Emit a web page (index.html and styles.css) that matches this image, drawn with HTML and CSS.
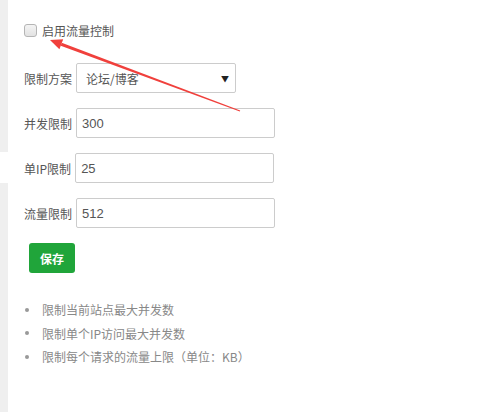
FILE: index.html
```html
<!DOCTYPE html>
<html lang="zh-CN">
<head>
<meta charset="utf-8">
<title>流量控制</title>
<link rel="stylesheet" href="styles.css">
</head>
<body>
<div class="page">
  <aside class="strip">
    <div class="strip-top"></div>
    <div class="strip-gap"></div>
    <div class="strip-bottom"></div>
  </aside>
  <main class="content">
    <label class="toggle"><span class="checkbox"></span><span class="toggle-text">启用流量控制</span></label>
    <div class="form">
      <div class="row">
        <span class="label">限制方案</span>
        <div class="select"><span>论坛/博客</span><span class="caret">▼</span></div>
      </div>
      <div class="row">
        <span class="label">并发限制</span>
        <div class="input">300</div>
      </div>
      <div class="row">
        <span class="label">单IP限制</span>
        <div class="input">25</div>
      </div>
      <div class="row">
        <span class="label">流量限制</span>
        <div class="input">512</div>
      </div>
      <button class="btn-save">保存</button>
    </div>
    <ul class="tips">
      <li>限制当前站点最大并发数</li>
      <li>限制单个IP访问最大并发数</li>
      <li>限制每个请求的流量上限（单位：KB）</li>
    </ul>
  </main>
  <svg class="arrow" width="480" height="412" viewBox="0 0 480 412">
    <polygon fill="#f0403c" points="240.2,110.5 239.8,111.5 60.7,45.8 61.7,42.8"/>
    <polygon fill="#f0403c" points="50,40 63.2,39.3 59.4,49.2"/>
  </svg>
</div>
</body>
</html>
```
FILE: styles.css
```css
* { box-sizing: border-box; }
html, body { margin: 0; padding: 0; background: #fff; }
body {
  font-family: "Noto Sans CJK SC", "Liberation Sans", sans-serif;
  font-size: 12px;
  color: #555;
}
.page {
  position: relative;
  width: 480px;
  height: 412px;
  display: flex;
  overflow: hidden;
}
.strip {
  width: 8px;
  display: flex;
  flex-direction: column;
}
.strip-top { height: 152px; background: #efefef; }
.strip-gap { height: 31px; background: #fff; }
.strip-bottom { flex: 1; background: #efefef; }
.content {
  flex: 1;
  padding: 20px 0 0 16px;
}
.toggle {
  display: flex;
  align-items: center;
  height: 21px;
  line-height: 21px;
}
.checkbox {
  width: 13px;
  height: 13px;
  border: 1px solid #b5b5b5;
  border-radius: 3px;
  background: linear-gradient(#f4f4f4, #e2e2e2);
  margin-right: 5px;
}
.toggle-text { color: #555; }
.form {
  margin-top: 22px;
  display: flex;
  flex-direction: column;
  gap: 15px;
}
.row {
  display: flex;
  align-items: center;
  height: 30px;
}
.label {
  margin-right: 4px;
  color: #555;
}
.select {
  width: 160px;
  height: 30px;
  border: 1px solid #ccc;
  border-radius: 2px;
  display: flex;
  align-items: center;
  justify-content: space-between;
  padding: 0 6px 0 9px;
  color: #555;
}
.caret {
  font-size: 8px;
  color: #222;
}
.input {
  width: 199px;
  height: 30px;
  border: 1px solid #ccc;
  border-radius: 2px;
  display: flex;
  align-items: center;
  padding-left: 5px;
  font-family: "Liberation Sans", "Noto Sans CJK SC", sans-serif;
  font-size: 13px;
  color: #555;
}
.btn-save {
  align-self: flex-start;
  margin-left: 5px;
  width: 46px;
  height: 30px;
  border: 0;
  border-radius: 3px;
  background: #20a53a;
  color: #fff;
  font-family: "Noto Sans CJK SC", sans-serif;
  font-size: 12px;
  font-weight: bold;
  padding: 0;
}
.tips {
  list-style: none;
  margin: 25px 0 0 0;
  padding: 0;
  color: #888;
  line-height: 23.5px;
}
.tips li {
  display: flex;
  align-items: center;
}
.tips li::before {
  content: "";
  width: 4px;
  height: 4px;
  border-radius: 50%;
  background: #999;
  margin: 0 13px 0 1px;
}
.arrow {
  position: absolute;
  left: 0;
  top: 0;
  pointer-events: none;
}
```
